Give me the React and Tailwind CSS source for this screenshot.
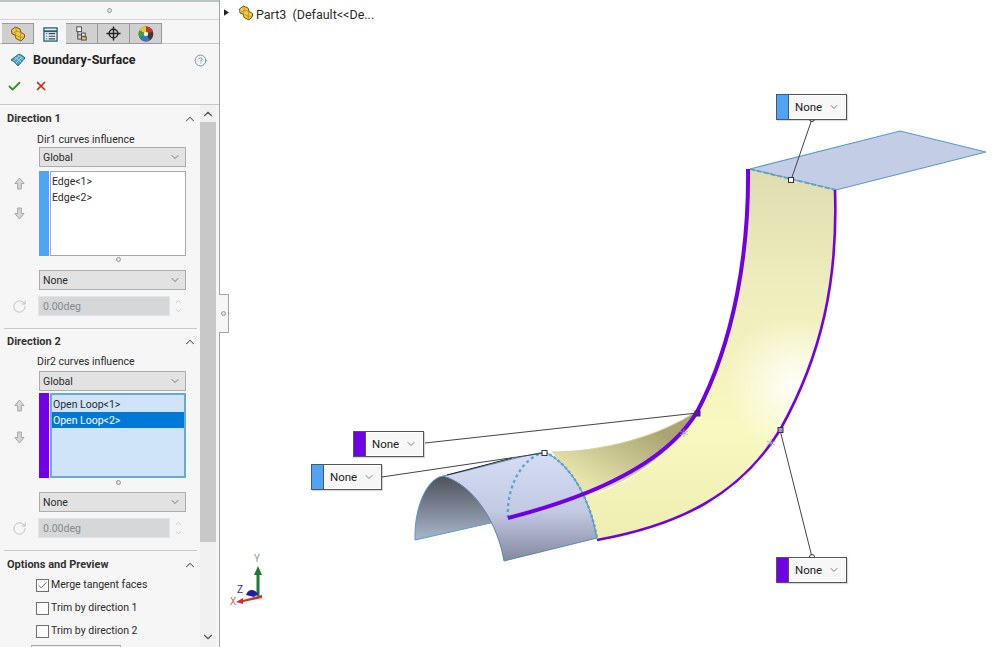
import { Check, ChevronDown, ChevronUp, X, CircleHelp, RotateCw } from "lucide-react";

const PartIcon = ({ className }) => (
  <svg viewBox="0 0 16 16" className={className}>
    <path d="M1.5 4 L5.5 1 L10 3 L11 6.5 L14.5 8.5 L14.5 11.5 L11 15 L6 12.5 L5 9 L2 8 Z" fill="#f4c93f" stroke="#6b5a20" strokeWidth="1" strokeLinejoin="round" />
    <path d="M5.5 1 L6.5 5 L2 8 M6.5 5 L11 6.5 M5 9 L6.5 5 M11 6.5 L10 11 L14.5 11.5 M10 11 L11 15 M5 9 L10 11" fill="none" stroke="#a08428" strokeWidth="0.7" />
  </svg>
);

const PropertyIcon = () => (
  <svg viewBox="0 0 16 16" className="w-[15px] h-[15px]">
    <rect x="1" y="1" width="14" height="14" fill="#eef4f6" stroke="#24606f" strokeWidth="1.4" />
    <path d="M1 4.5 H15" stroke="#24606f" strokeWidth="2" />
    <path d="M6 7 H13 M6 9.8 H13 M6 12.6 H13" stroke="#37474f" strokeWidth="1.2" />
    <path d="M3 7 H4.6 M3 9.8 H4.6 M3 12.6 H4.6" stroke="#2f8fa8" strokeWidth="1.2" />
  </svg>
);

const ConfigIcon = () => (
  <svg viewBox="0 0 16 16" className="w-[15px] h-[15px]">
    <rect x="3" y="1" width="5" height="5" fill="#fff" stroke="#444" />
    <path d="M4 6 V14 H8 M4 9.5 H8" fill="none" stroke="#444" />
    <rect x="8" y="7.5" width="4" height="3.5" fill="#dfe6ea" stroke="#444" />
    <rect x="8" y="11.5" width="5" height="3.5" fill="#f2c53d" stroke="#444" />
  </svg>
);

const TargetIcon = () => (
  <svg viewBox="0 0 16 16" className="w-[15px] h-[15px]">
    <circle cx="8" cy="8" r="4.6" fill="none" stroke="#222" strokeWidth="1.5" />
    <path d="M8 0.5 V15.5 M0.5 8 H15.5" stroke="#222" strokeWidth="1.5" />
  </svg>
);

const PieIcon = () => (
  <svg viewBox="0 0 16 16" className="w-[16px] h-[16px]">
    <circle cx="8" cy="8" r="7.4" fill="#3f3a36" />
    <path d="M8 8 L8 0.6 A7.4 7.4 0 0 1 15 5.6 Z" fill="#c9342c" />
    <path d="M8 8 L8 0.6 A7.4 7.4 0 0 0 1.4 4.6 Z" fill="#e8c62f" />
    <path d="M8 8 L1.4 4.6 A7.4 7.4 0 0 0 2 12.4 Z" fill="#3d9f45" />
    <path d="M8 8 L2 12.4 A7.4 7.4 0 0 0 12 14.2 Z" fill="#3a74c4" />
    <circle cx="8" cy="8" r="2.2" fill="#f4f0d8" />
  </svg>
);

const SurfaceIcon = () => (
  <svg viewBox="0 0 16 14" className="w-[16px] h-[14px]">
    <path d="M1 7 L9 1 C11 2 13 3 15 5 L8 13 C6 10 3 8 1 7 Z" fill="#4aa3c9" stroke="#1f5f80" strokeWidth="1" />
    <path d="M5 4 L11 9 M8 2 L13.5 6.5 M3.5 8 L9 3 M6 10 L12 4" stroke="#cfe9f3" strokeWidth="0.7" />
  </svg>
);

// hollow move up / move down arrows beside the lists
const MoveArrow = ({ down }) => (
  <svg viewBox="0 0 12 14" className={`w-[11px] h-[13px] ${down ? "rotate-180" : ""}`}>
    <path d="M6 1 L11 7 H8 V13 H4 V7 H1 Z" fill="#d6d6d6" stroke="#a2a2a2" strokeWidth="1" strokeLinejoin="round" />
  </svg>
);

const Tab = ({ active, children }) => (
  <div className={`w-[32px] flex items-center justify-center ${active ? "h-[22px] bg-[#f6f6f6]" : "h-[21px] bg-[#d0d0d0] border-t border-r border-b border-[#9a9a9a]"}`}>
    {children}
  </div>
);

const Dot = () => <div className="w-[5px] h-[5px] rounded-full border border-[#9a9a9a] bg-[#e4e4e4]" />;

const Select = ({ value }) => (
  <div className="ml-[39px] w-[147px] h-[20px] flex items-center justify-between pl-[3px] pr-[4px] bg-[#e2e2e2] border border-[#adadad]">
    <span className="pt-[1px]">{value}</span>
    <ChevronDown size={12} color="#555" strokeWidth={1.5} />
  </div>
);

const Spin = () => (
  <div className="flex items-center h-[20px] mt-[6px]">
    <div className="w-[38px] flex justify-center pl-[1px]">
      <RotateCw size={15} color="#bdbdbd" strokeWidth={1.5} />
    </div>
    <div className="w-[132px] h-[20px] flex items-center pl-[4px] pt-[1px] bg-[#d5d7d9] border border-[#e4e4e4] text-[#85898c]">0.00deg</div>
    <div className="w-[16px] flex flex-col items-center">
      <ChevronUp size={9} color="#c0c0c0" />
      <ChevronDown size={9} color="#c0c0c0" />
    </div>
  </div>
);

const Header = ({ title, className }) => (
  <div className={`flex items-center justify-between pl-[7px] pr-[3px] ${className}`}>
    <span className="font-bold text-[11px] pt-[1px] text-[#333]">{title}</span>
    <ChevronUp size={14} color="#555" strokeWidth={1.8} />
  </div>
);

const Rule = () => <div className="ml-[4px] w-[193px] h-[1px] bg-[#c8c8c8]" />;

const CurveGroup = ({ title, label, strip, items, selected, sectionClass, headerClass, selectGap, listClass, listGap, arrowGap, handleClass }) => (
  <section className={sectionClass}>
    <Header title={title} className={headerClass} />
    <div className="pl-[37px] h-[13px] leading-[13px]">{label}</div>
    <div className={selectGap}>
      <Select value="Global" />
    </div>
    <div className={`flex h-[85px] ${listGap}`}>
      <div className={`w-[39px] flex flex-col items-center pt-[6px] ${arrowGap}`}>
        <MoveArrow />
        <MoveArrow down />
      </div>
      <div className={`w-[10px] ${strip}`} />
      <div className={`ml-[1px] w-[136px] pt-[1px] ${listClass}`}>
        {items.map((item, i) => (
          <div key={item} className={`h-[16px] leading-[17px] pl-[1px] ${i === selected ? "bg-[#0078d7] text-white" : ""}`}>{item}</div>
        ))}
      </div>
    </div>
    <div className={`flex justify-center pl-[36px] ${handleClass}`}>
      <Dot />
    </div>
    <Select value="None" />
    <Spin />
  </section>
);

const Option = ({ checked, label }) => (
  <div className="flex items-center h-[14px] pl-[36px] gap-[2px]">
    <div className="w-[13px] h-[13px] flex items-center justify-center bg-[#fbfbfb] border border-[#6f6f6f]">
      {checked && <Check size={11} color="#333" strokeWidth={1.6} />}
    </div>
    <span>{label}</span>
  </div>
);

const Callout = ({ strip, className }) => (
  <div className={`absolute w-[71px] h-[26px] flex bg-white border border-[#555] shadow-[1px_1px_1px_rgba(0,0,0,0.15)] ${className}`}>
    <div className={`w-[12px] border-r border-[#555] ${strip}`} />
    <div className="flex-1 flex items-center justify-between pl-[5px] pr-[5px] m-[1px] bg-[#f7f7f7] text-[11.5px] text-[#222]">
      <span className="pt-[1px]">None</span>
      <ChevronDown size={12} color="#555" strokeWidth={1.5} />
    </div>
  </div>
);

const Drawing = () => (
  <svg viewBox="220 0 780 647" className="absolute inset-0 w-[780px] h-[647px]">
    <defs>
      <linearGradient id="yellow" x1="0" y1="169" x2="0" y2="540" gradientUnits="userSpaceOnUse">
        <stop offset="0" stopColor="#dfdcb0" />
        <stop offset="0.3" stopColor="#eeecbc" />
        <stop offset="0.7" stopColor="#f8f8c0" />
        <stop offset="1" stopColor="#eeeeb2" />
      </linearGradient>
      <radialGradient id="shine" cx="795" cy="385" r="70" gradientUnits="userSpaceOnUse">
        <stop offset="0" stopColor="#ffffff" stopOpacity="0.95" />
        <stop offset="1" stopColor="#ffffff" stopOpacity="0" />
      </radialGradient>
      <linearGradient id="olive" x1="640" y1="420" x2="600" y2="490" gradientUnits="userSpaceOnUse">
        <stop offset="0" stopColor="#a9a472" />
        <stop offset="1" stopColor="#e6e3ab" />
      </linearGradient>
      <linearGradient id="outer" x1="0" y1="452" x2="0" y2="561" gradientUnits="userSpaceOnUse">
        <stop offset="0" stopColor="#d6def6" />
        <stop offset="0.55" stopColor="#c2c9e2" />
        <stop offset="1" stopColor="#83889f" />
      </linearGradient>
      <linearGradient id="inner" x1="0" y1="476" x2="0" y2="540" gradientUnits="userSpaceOnUse">
        <stop offset="0" stopColor="#4e515c" />
        <stop offset="1" stopColor="#a9b6cb" />
      </linearGradient>
    </defs>

    <polygon points="750,169 900,131 986,152 836,190" fill="#c3cde6" stroke="#5b9bc7" strokeWidth="1.2" />

    <path d="M552 452 C600 452 660 437 700 409 L692 425 C650 470 620 485 585 497 C575 480 562 465 552 452 Z" fill="url(#olive)" />
    <path d="M552 452 C600 452 660 437 700 409" fill="none" stroke="#d8d29a" strokeWidth="1" />

    <path d="M748 169 L835 190 C838 280 822 355 780 430 C740 495 680 525 597 540 L585 497 C630 485 670 455 697 412 C735 340 749 250 748 169 Z" fill="url(#yellow)" />
    <path d="M748 169 L835 190 C838 280 822 355 780 430 C740 495 680 525 597 540 L585 497 C630 485 670 455 697 412 C735 340 749 250 748 169 Z" fill="url(#shine)" />

    <path d="M415 540 C414 505 428 478 443 476 C470 482 488 500 495 522 Z" fill="url(#inner)" stroke="#5b9bc7" strokeWidth="1" />
    <path d="M443 476 C480 468 520 456 545 452 C572 465 590 500 597 538 L504 561 C498 525 475 485 443 476 Z" fill="url(#outer)" stroke="#5b87a8" strokeWidth="1" />
    <path d="M447 475 L512 458" fill="none" stroke="#222" strokeWidth="1" />

    <path d="M508 518 C506 490 520 458 545 452" fill="none" stroke="#5da5d0" strokeWidth="2.4" strokeDasharray="3 3" />
    <path d="M545 452 C572 465 590 500 597 538" fill="none" stroke="#5da5d0" strokeWidth="2.4" strokeDasharray="3 2" />
    <path d="M750 169 L836 190" fill="none" stroke="#5da5c8" strokeWidth="2" strokeDasharray="5 2" />

    <path d="M748 169 C749 250 735 340 697 412 C665 465 590 497 508 518" fill="none" stroke="#7100e6" strokeWidth="4" />
    <path d="M835 190 C838 280 822 355 780 430 C740 495 680 525 597 540" fill="none" stroke="#7100e6" strokeWidth="2.6" />

    <path d="M771 439 L771 447 M767 441 L775 445 M767 445 L775 441" stroke="#8fa8d8" strokeWidth="0.8" />
    <path d="M684 429 L684 437 M680 431 L688 435 M680 435 L688 431" stroke="#8fa8d8" strokeWidth="0.8" />

    <g fill="none" stroke="#444" strokeWidth="1">
      <path d="M812 119 L791 180" />
      <path d="M425 443 L697 413" />
      <path d="M382 477 L544 453" />
      <path d="M780 430 L812 557" />
    </g>
    <g fill="#fff" stroke="#333" strokeWidth="1">
      <circle cx="812" cy="119" r="2.5" />
      <circle cx="812" cy="557" r="2.5" />
      <rect x="788.5" y="177.5" width="5" height="5" />
      <rect x="542" y="450.5" width="5" height="5" />
      <rect x="778" y="427.5" width="5" height="5" fill="#a88be0" />
      <rect x="695" y="411" width="5" height="5" fill="#7100e6" />
    </g>

    {/* axis triad */}
    <path d="M258 596 V572" stroke="#1c7a35" strokeWidth="3" />
    <path d="M258 566 L262 575 H254 Z" fill="#1c7a35" />
    <path d="M246 595 C248 589 254 588 258 594 L254 597 Z" fill="#1f1fa8" />
    <path d="M262 595 L243 600 V598 L236 602 L243 604 V602 L262 598 Z" fill="#d03030" />
    <text x="254" y="562" fontSize="10" fill="#8a9a94" fontFamily="Roboto, sans-serif">Y</text>
    <text x="237" y="593" fontSize="10" fill="#1f1fa8" fontFamily="Roboto, sans-serif">Z</text>
    <text x="230" y="605" fontSize="10" fill="#d07070" fontFamily="Roboto, sans-serif">X</text>
  </svg>
);

export default function App() {
  return (
    <div className="relative flex w-[1000px] h-[647px] overflow-hidden bg-white text-[10.5px] text-[#2b2b2b] font-['Roboto',sans-serif]">
      {/* property manager */}
      <aside className="w-[220px] h-[647px] flex flex-col bg-[#f6f6f6] border-r border-[#a4a4a4]">
        <div className="h-[2px] bg-[#b9c7c0]" />
        <div className="h-[18px] flex items-center justify-center border-b border-[#d4d4d4]">
          <Dot />
        </div>
        <div className="h-[3px]" />
        <div className="h-[21px] flex items-start pl-[2px] border-b border-[#c8c8c8]">
          <Tab><PartIcon className="w-[16px] h-[16px]" /></Tab>
          <Tab active><PropertyIcon /></Tab>
          <Tab><ConfigIcon /></Tab>
          <Tab><TargetIcon /></Tab>
          <Tab><PieIcon /></Tab>
        </div>
        <div className="h-[30px] flex items-center pl-[10px] pt-[2px] pr-[12px]">
          <SurfaceIcon />
          <span className="ml-[7px] flex-1 font-bold text-[12.5px] text-[#222]">Boundary-Surface</span>
          <CircleHelp size={13} color="#5a7f9a" strokeWidth={1.5} />
        </div>
        <div className="h-[31px] flex items-center pl-[7px] gap-[12px] pb-[6px] border-b border-[#c8c8c8]">
          <Check size={15} color="#3c8c2c" strokeWidth={3} />
          <X size={14} color="#cc2a1e" strokeWidth={3} />
        </div>
        <div className="flex flex-1 min-h-0">
          <div className="w-[200px] overflow-hidden">
            <CurveGroup
              title="Direction 1"
              label="Dir1 curves influence"
              strip="bg-[#4ea5f7]"
              items={["Edge<1>", "Edge<2>"]}
              selected={-1}
              sectionClass="h-[223px]"
              headerClass="h-[28px]"
              selectGap="mt-[1px]"
              listGap="mt-[4px]"
              arrowGap="gap-[17px]"
              listClass="bg-white border border-[#a8a8a8]"
              handleClass="h-[14px] pt-[1px]"
            />
            <Rule />
            <CurveGroup
              title="Direction 2"
              label="Dir2 curves influence"
              strip="bg-[#7100e6]"
              items={["Open Loop<1>", "Open Loop<2>"]}
              selected={1}
              sectionClass="h-[221px]"
              headerClass="h-[26px]"
              selectGap="mt-[3px]"
              listGap="mt-[2px]"
              arrowGap="gap-[19px]"
              listClass="bg-[#cfe4f8] border-2 border-[#6aa9d6]"
              handleClass="h-[14px] pt-[2px]"
            />
            <Rule />
            <Header title="Options and Preview" className="h-[27px]" />
            <div className="flex flex-col gap-[9px]">
              <Option checked label="Merge tangent faces" />
              <Option label="Trim by direction 1" />
              <Option label="Trim by direction 2" />
            </div>
            <div className="ml-[31px] mt-[7px] w-[90px] h-[6px] bg-[#ececec] border-t border-x border-[#a8a8a8]" />
          </div>
          <div className="w-[16px] flex flex-col items-center bg-[#f1f1f1]">
            <div className="h-[17px] flex items-center"><ChevronUp size={14} color="#555" strokeWidth={2} /></div>
            <div className="w-full h-[420px] bg-[#c8c8c8]" />
            <div className="flex-1" />
            <div className="h-[17px] flex items-center mb-[2px]"><ChevronDown size={14} color="#555" strokeWidth={2} /></div>
          </div>
        </div>
      </aside>

      {/* panel flap */}
      <div className="absolute left-[219px] top-[294px] w-[10px] h-[39px] flex items-center justify-center bg-[#f6f6f6] border border-l-0 border-[#a4a4a4]">
        <Dot />
      </div>

      {/* graphics area */}
      <main className="relative flex-1">
        <Drawing />
        <div className="relative flex items-center h-[30px] pl-[4px] text-[12.5px] text-[#2b2b2b]">
          <svg viewBox="0 0 6 8" className="w-[5px] h-[7px] mb-[5px]"><path d="M0 0 L6 4 L0 8 Z" fill="#222" /></svg>
          <PartIcon className="w-[16px] h-[16px] ml-[9px] mb-[4px]" />
          <span className="ml-[2px] whitespace-pre">Part3  (Default&lt;&lt;De...</span>
        </div>
        <Callout strip="bg-[#4ea5f7]" className="left-[556px] top-[94px]" />
        <Callout strip="bg-[#7100e6]" className="left-[133px] top-[431px]" />
        <Callout strip="bg-[#4ea5f7]" className="left-[91px] top-[464px]" />
        <Callout strip="bg-[#7100e6]" className="left-[556px] top-[557px]" />
      </main>
    </div>
  );
}
